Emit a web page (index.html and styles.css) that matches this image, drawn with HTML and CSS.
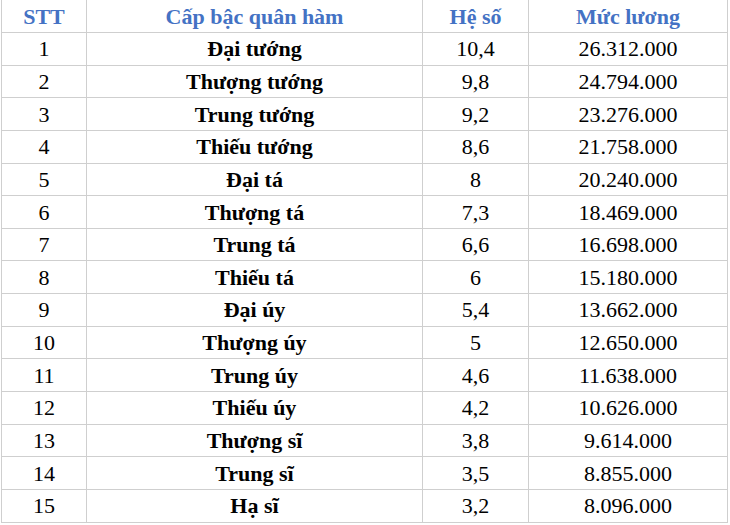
FILE: index.html
```html
<!DOCTYPE html>
<html lang="vi">
<head>
<meta charset="utf-8">
<title>Bảng lương quân hàm</title>
<link rel="stylesheet" href="styles.css">
</head>
<body>
<table class="salary">
  <colgroup>
    <col class="c-stt">
    <col class="c-rank">
    <col class="c-coef">
    <col class="c-pay">
  </colgroup>
  <thead>
    <tr><th>STT</th><th>Cấp bậc quân hàm</th><th>Hệ số</th><th>Mức lương</th></tr>
  </thead>
  <tbody>
    <tr><td>1</td><td class="rank">Đại tướng</td><td>10,4</td><td>26.312.000</td></tr>
    <tr><td>2</td><td class="rank">Thượng tướng</td><td>9,8</td><td>24.794.000</td></tr>
    <tr><td>3</td><td class="rank">Trung tướng</td><td>9,2</td><td>23.276.000</td></tr>
    <tr><td>4</td><td class="rank">Thiếu tướng</td><td>8,6</td><td>21.758.000</td></tr>
    <tr><td>5</td><td class="rank">Đại tá</td><td>8</td><td>20.240.000</td></tr>
    <tr><td>6</td><td class="rank">Thượng tá</td><td>7,3</td><td>18.469.000</td></tr>
    <tr><td>7</td><td class="rank">Trung tá</td><td>6,6</td><td>16.698.000</td></tr>
    <tr><td>8</td><td class="rank">Thiếu tá</td><td>6</td><td>15.180.000</td></tr>
    <tr><td>9</td><td class="rank">Đại úy</td><td>5,4</td><td>13.662.000</td></tr>
    <tr><td>10</td><td class="rank">Thượng úy</td><td>5</td><td>12.650.000</td></tr>
    <tr><td>11</td><td class="rank">Trung úy</td><td>4,6</td><td>11.638.000</td></tr>
    <tr><td>12</td><td class="rank">Thiếu úy</td><td>4,2</td><td>10.626.000</td></tr>
    <tr><td>13</td><td class="rank">Thượng sĩ</td><td>3,8</td><td>9.614.000</td></tr>
    <tr><td>14</td><td class="rank">Trung sĩ</td><td>3,5</td><td>8.855.000</td></tr>
    <tr><td>15</td><td class="rank">Hạ sĩ</td><td>3,2</td><td>8.096.000</td></tr>
  </tbody>
</table>
</body>
</html>
```
FILE: styles.css
```css
html, body {
  margin: 0;
  padding: 0;
  background: #ffffff;
}
body {
  font-family: "Liberation Serif", Tinos, "Times New Roman", Times, "DejaVu Serif", serif;
  color: #000000;
}
.salary {
  border-collapse: collapse;
  table-layout: fixed;
  width: 727px;
  margin: -1px 0 0 1px;
  font-size: 22px;
  font-family: "Liberation Serif", Tinos, "Times New Roman", Times, "DejaVu Serif", serif;
}
.c-stt { width: 85px; }
.c-rank { width: 336px; }
.c-coef { width: 106px; }
.c-pay { width: 199px; }
.salary th,
.salary td {
  border: 1px solid #cfcfcf;
  padding: 0;
  text-align: center;
  vertical-align: middle;
  line-height: 25px;
  white-space: nowrap;
  font-family: "Liberation Serif", Tinos, "Times New Roman", Times, "DejaVu Serif", serif;
}
.salary th {
  height: 32px;
  font-weight: bold;
  color: #4472c4;
}
.salary td {
  height: 31.65px;
  font-weight: normal;
}
.salary td.rank {
  font-weight: bold;
}
```
